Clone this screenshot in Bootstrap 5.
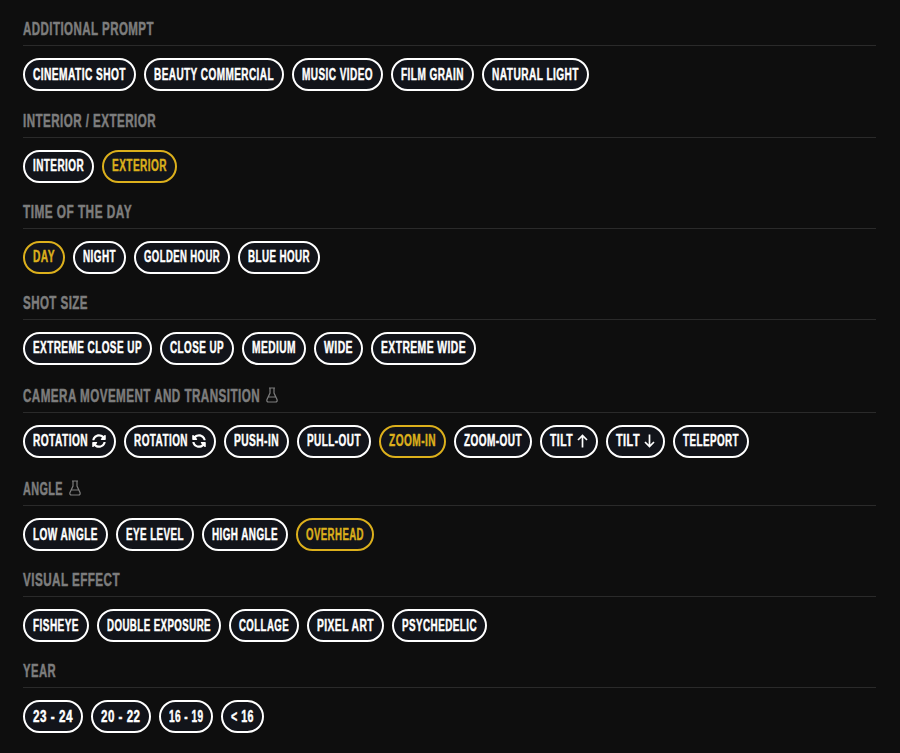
<!DOCTYPE html>
<html lang="en">
<head>
  <meta charset="UTF-8" />
  <meta name="viewport" content="width=device-width, initial-scale=1.0"/>
  <title>Prompt options</title>
  <link href="https://cdn.jsdelivr.net/npm/bootstrap@5.3.3/dist/css/bootstrap.min.css" rel="stylesheet"/>
  <style>
    body { background: #0e0e0e; font-family: "Liberation Sans", sans-serif; }
    .panel { padding: 19.4px 24px 0 23px; }
    .opt-title { color: #7d7d7d; font-size: 18px; font-weight: 700; line-height: 20px; margin: 0; padding-bottom: 6px; border-bottom: 1px solid #2a2a2a; display: flex; align-items: flex-end; gap: 6px; -webkit-text-stroke: .5px #7d7d7d; letter-spacing: .7px; }
    .opt-group { margin-bottom: 19.15px; }
    .opt-row { display: flex; flex-wrap: wrap; gap: 8px; margin-top: 12px; }
    .pill { height: 33px; padding: 0 8px; border: 2px solid #fff; border-radius: 17px; background: #12141a; color: #fff; font-size: 16px; font-weight: 700; display: inline-flex; align-items: center; gap: 4px; -webkit-text-stroke: .45px currentColor; letter-spacing: .7px; }
    .pill.on { border-color: #dcb01c; color: #dcb01c; }
    .squeeze { display: inline-block; white-space: nowrap; transform-origin: 0 50%; }
    .flask { width: 12px; height: 16px; margin: 3px 0; }
    .ico-sync { width: 14px; height: 14px; }
    .ico-arrow { width: 11px; height: 14px; }
  </style>
</head>
<body>
  <div class="panel">
    <div class="opt-group">
      <h6 class="opt-title"><span class="squeeze" data-w="131">ADDITIONAL PROMPT</span></h6>
      <div class="opt-row">
        <span class="pill"><span class="squeeze" data-w="93">CINEMATIC SHOT</span></span>
        <span class="pill"><span class="squeeze" data-w="120">BEAUTY COMMERCIAL</span></span>
        <span class="pill"><span class="squeeze" data-w="71">MUSIC VIDEO</span></span>
        <span class="pill"><span class="squeeze" data-w="63">FILM GRAIN</span></span>
        <span class="pill"><span class="squeeze" data-w="87">NATURAL LIGHT</span></span>
      </div>
    </div>
    <div class="opt-group">
      <h6 class="opt-title"><span class="squeeze" data-w="133">INTERIOR / EXTERIOR</span></h6>
      <div class="opt-row">
        <span class="pill"><span class="squeeze" data-w="51">INTERIOR</span></span>
        <span class="pill on"><span class="squeeze" data-w="55">EXTERIOR</span></span>
      </div>
    </div>
    <div class="opt-group">
      <h6 class="opt-title"><span class="squeeze" data-w="109">TIME OF THE DAY</span></h6>
      <div class="opt-row">
        <span class="pill on"><span class="squeeze" data-w="22">DAY</span></span>
        <span class="pill"><span class="squeeze" data-w="33">NIGHT</span></span>
        <span class="pill"><span class="squeeze" data-w="76">GOLDEN HOUR</span></span>
        <span class="pill"><span class="squeeze" data-w="62">BLUE HOUR</span></span>
      </div>
    </div>
    <div class="opt-group">
      <h6 class="opt-title"><span class="squeeze" data-w="65">SHOT SIZE</span></h6>
      <div class="opt-row">
        <span class="pill"><span class="squeeze" data-w="109">EXTREME CLOSE UP</span></span>
        <span class="pill"><span class="squeeze" data-w="54">CLOSE UP</span></span>
        <span class="pill"><span class="squeeze" data-w="44">MEDIUM</span></span>
        <span class="pill"><span class="squeeze" data-w="29">WIDE</span></span>
        <span class="pill"><span class="squeeze" data-w="85">EXTREME WIDE</span></span>
      </div>
    </div>
    <div class="opt-group">
      <h6 class="opt-title"><span class="squeeze" data-w="237">CAMERA MOVEMENT AND TRANSITION</span>
        <svg class="flask" viewBox="0 0 12 16" fill="none" stroke="currentColor" stroke-width="1.2"><path d="M3 1h6M4 1v5L1 12.500C.5 14 1.200 15 2.500 15h7c1.300 0 2-1 1.500-2.500L8 6V1M2.500 10h7"/></svg>
      </h6>
      <div class="opt-row">
        <span class="pill"><span class="squeeze" data-w="55">ROTATION</span>
          <svg class="ico-sync" viewBox="0 0 512 512" fill="currentColor"><path d="M370.72 133.28C339.458 104.008 298.888 87.962 255.848 88c-77.458.068-144.328 53.178-162.791 126.85-1.344 5.363-6.122 9.15-11.651 9.15H24.103c-7.498 0-13.194-6.807-11.807-14.176C33.933 94.924 134.813 8 256 8c66.448 0 126.791 26.136 171.315 68.685L463.03 40.97C478.149 25.851 504 36.559 504 57.941V192c0 13.255-10.745 24-24 24H345.941c-21.382 0-32.09-25.851-16.971-40.971l41.75-41.749zM32 296h134.059c21.382 0 32.09 25.851 16.971 40.971l-41.75 41.75c31.262 29.273 71.835 45.319 114.876 45.28 77.418-.07 144.315-53.144 162.787-126.849 1.344-5.363 6.122-9.15 11.651-9.15h57.304c7.498 0 13.194 6.807 11.807 14.176C478.067 417.076 377.187 504 256 504c-66.448 0-126.791-26.136-171.315-68.685L48.97 471.03C33.851 486.149 8 475.441 8 454.059V320c0-13.255 10.745-24 24-24z"/></svg>
        </span>
        <span class="pill"><span class="squeeze" data-w="54">ROTATION</span>
          <svg class="ico-sync" viewBox="0 0 512 512" fill="currentColor"><path transform="matrix(-1 0 0 1 512 0)" d="M370.72 133.28C339.458 104.008 298.888 87.962 255.848 88c-77.458.068-144.328 53.178-162.791 126.85-1.344 5.363-6.122 9.15-11.651 9.15H24.103c-7.498 0-13.194-6.807-11.807-14.176C33.933 94.924 134.813 8 256 8c66.448 0 126.791 26.136 171.315 68.685L463.03 40.97C478.149 25.851 504 36.559 504 57.941V192c0 13.255-10.745 24-24 24H345.941c-21.382 0-32.09-25.851-16.971-40.971l41.75-41.749zM32 296h134.059c21.382 0 32.09 25.851 16.971 40.971l-41.75 41.75c31.262 29.273 71.835 45.319 114.876 45.28 77.418-.07 144.315-53.144 162.787-126.849 1.344-5.363 6.122-9.15 11.651-9.15h57.304c7.498 0 13.194 6.807 11.807 14.176C478.067 417.076 377.187 504 256 504c-66.448 0-126.791-26.136-171.315-68.685L48.97 471.03C33.851 486.149 8 475.441 8 454.059V320c0-13.255 10.745-24 24-24z"/></svg>
        </span>
        <span class="pill"><span class="squeeze" data-w="45">PUSH-IN</span></span>
        <span class="pill"><span class="squeeze" data-w="54">PULL-OUT</span></span>
        <span class="pill on"><span class="squeeze" data-w="47">ZOOM-IN</span></span>
        <span class="pill"><span class="squeeze" data-w="58">ZOOM-OUT</span></span>
        <span class="pill"><span class="squeeze" data-w="23">TILT</span>
          <svg class="ico-arrow" viewBox="0 0 11 14" fill="none" stroke="currentColor" stroke-width="1.700"><path d="M5.500 13.500V1.500M1 6l4.500-4.500L10 6"/></svg>
        </span>
        <span class="pill"><span class="squeeze" data-w="24">TILT</span>
          <svg class="ico-arrow" viewBox="0 0 11 14" fill="none" stroke="currentColor" stroke-width="1.700"><path d="M5.500 .5v12M1 8l4.500 4.500L10 8"/></svg>
        </span>
        <span class="pill"><span class="squeeze" data-w="56">TELEPORT</span></span>
      </div>
    </div>
    <div class="opt-group">
      <h6 class="opt-title"><span class="squeeze" data-w="40">ANGLE</span>
        <svg class="flask" viewBox="0 0 12 16" fill="none" stroke="currentColor" stroke-width="1.2"><path d="M3 1h6M4 1v5L1 12.500C.5 14 1.200 15 2.500 15h7c1.300 0 2-1 1.500-2.500L8 6V1M2.500 10h7"/></svg>
      </h6>
      <div class="opt-row">
        <span class="pill"><span class="squeeze" data-w="65">LOW ANGLE</span></span>
        <span class="pill"><span class="squeeze" data-w="58">EYE LEVEL</span></span>
        <span class="pill"><span class="squeeze" data-w="66">HIGH ANGLE</span></span>
        <span class="pill on"><span class="squeeze" data-w="58">OVERHEAD</span></span>
      </div>
    </div>
    <div class="opt-group">
      <h6 class="opt-title"><span class="squeeze" data-w="97">VISUAL EFFECT</span></h6>
      <div class="opt-row">
        <span class="pill"><span class="squeeze" data-w="46">FISHEYE</span></span>
        <span class="pill"><span class="squeeze" data-w="104">DOUBLE EXPOSURE</span></span>
        <span class="pill"><span class="squeeze" data-w="50">COLLAGE</span></span>
        <span class="pill"><span class="squeeze" data-w="57">PIXEL ART</span></span>
        <span class="pill"><span class="squeeze" data-w="75">PSYCHEDELIC</span></span>
      </div>
    </div>
    <div class="opt-group">
      <h6 class="opt-title"><span class="squeeze" data-w="33">YEAR</span></h6>
      <div class="opt-row">
        <span class="pill"><span class="squeeze" data-w="40">23 - 24</span></span>
        <span class="pill"><span class="squeeze" data-w="39.5">20 - 22</span></span>
        <span class="pill"><span class="squeeze" data-w="34.5">16 - 19</span></span>
        <span class="pill"><span class="squeeze" data-w="23">&lt; 16</span></span>
      </div>
    </div>
  </div>
  <script src="https://cdn.jsdelivr.net/npm/bootstrap@5.3.3/dist/js/bootstrap.bundle.min.js"></script>
  <script>
    // no condensed font installed, so each label is squeezed to its measured width
    document.querySelectorAll(".squeeze").forEach(function (el) {
      const full = el.getBoundingClientRect().width;
      const w = Number(el.dataset.w);
      el.style.transform = "scaleX(" + (w / full) + ")";
      el.style.marginRight = (w - full) + "px";
    });
  </script>
</body>
</html>
